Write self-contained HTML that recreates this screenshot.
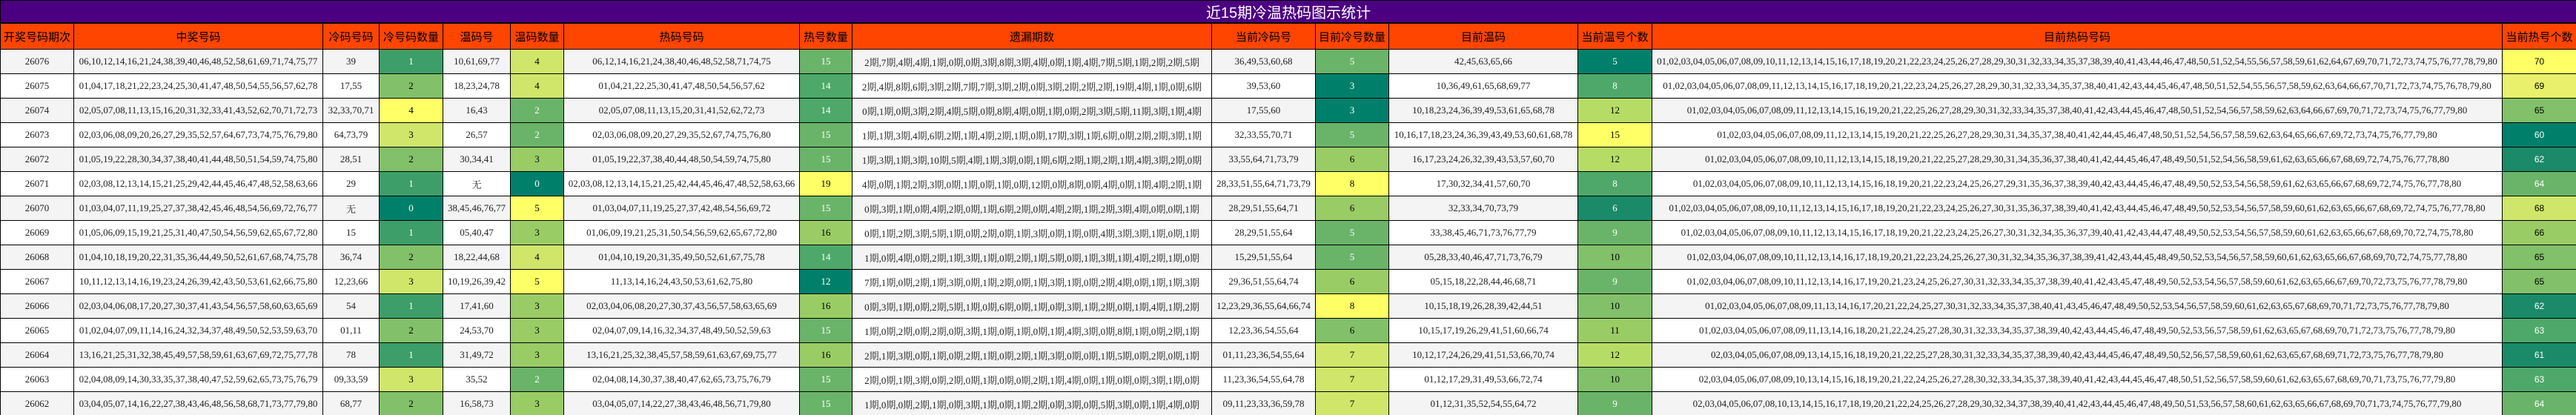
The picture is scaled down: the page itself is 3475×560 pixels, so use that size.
<!DOCTYPE html>
<html><head><meta charset="utf-8"><style>
html,body{margin:0;padding:0;background:#fff;width:3475px;height:560px;overflow:hidden}
table{border-collapse:collapse;table-layout:fixed;width:3475px}
td,th{border:1px solid #000;text-align:center;padding:0;white-space:nowrap;overflow:hidden;font-family:"Liberation Serif","Noto Serif CJK SC",serif;font-size:13px;color:#222}
.t td{background:#4b0082;color:#fff;height:27px;font-family:"Liberation Sans","Noto Sans CJK SC",sans-serif;font-size:20px;border-bottom:2px solid #000}
.h th{background:#ff4500;color:#000;height:34px;font-weight:normal;font-family:"Liberation Sans","Noto Sans CJK SC",sans-serif;font-size:15px}
tr.r td{height:32px}
tr.r:nth-child(odd) td{background:#f4f4f4}
tr.r:nth-child(even) td{background:#fff}
tr.r td.l{font-family:"Liberation Sans",sans-serif;font-size:12px}
tr.r td.c0{background:#00806a;color:#fff}
tr.r td.c1{background:#1a8a68;color:#fff}
tr.r td.c2{background:#3d9e69;color:#fff}
tr.r td.c3{background:#4ea86a;color:#fff}
tr.r td.c4{background:#6ab469;color:#fff}
tr.r td.c5{background:#82c06a;color:#000}
tr.r td.c6{background:#9acc66;color:#000}
tr.r td.c7{background:#b6dc66;color:#000}
tr.r td.c8{background:#cfe66a;color:#000}
tr.r td.c9{background:#e8f06c;color:#000}
tr.r td.c10{background:#ffff66;color:#000}
</style></head><body>
<table>
<colgroup><col style="width:99px"><col style="width:336px"><col style="width:76px"><col style="width:86px"><col style="width:91px"><col style="width:72px"><col style="width:318px"><col style="width:71px"><col style="width:485px"><col style="width:140px"><col style="width:99px"><col style="width:255px"><col style="width:100px"><col style="width:1147px"><col style="width:100px"></colgroup>
<tr class="t"><td colspan="15">近15期冷温热码图示统计</td></tr>
<tr class="h"><th>开奖号码期次</th><th>中奖号码</th><th>冷码号码</th><th>冷号码数量</th><th>温码号</th><th>温码数量</th><th>热码号码</th><th>热号数量</th><th>遗漏期数</th><th>当前冷码号</th><th>目前冷号数量</th><th>目前温码</th><th>当前温号个数</th><th>目前热码号码</th><th>当前热号个数</th></tr>
<tr class="r"><td>26076</td><td>06,10,12,14,16,21,24,38,39,40,46,48,52,58,61,69,71,74,75,77</td><td>39</td><td class="c2">1</td><td>10,61,69,77</td><td class="c8">4</td><td>06,12,14,16,21,24,38,40,46,48,52,58,71,74,75</td><td class="c4">15</td><td>2期,7期,4期,4期,1期,0期,0期,3期,8期,3期,4期,0期,1期,4期,7期,5期,1期,2期,2期,5期</td><td>36,49,53,60,68</td><td class="c4">5</td><td>42,45,63,65,66</td><td class="c0">5</td><td>01,02,03,04,05,06,07,08,09,10,11,12,13,14,15,16,17,18,19,20,21,22,23,24,25,26,27,28,29,30,31,32,33,34,35,37,38,39,40,41,43,44,46,47,48,50,51,52,54,55,56,57,58,59,61,62,64,67,69,70,71,72,73,74,75,76,77,78,79,80</td><td class="c10 l">70</td></tr>
<tr class="r"><td>26075</td><td>01,04,17,18,21,22,23,24,25,30,41,47,48,50,54,55,56,57,62,78</td><td>17,55</td><td class="c5">2</td><td>18,23,24,78</td><td class="c8">4</td><td>01,04,21,22,25,30,41,47,48,50,54,56,57,62</td><td class="c3">14</td><td>2期,4期,8期,6期,3期,2期,7期,7期,3期,2期,0期,3期,2期,2期,2期,19期,4期,1期,0期,6期</td><td>39,53,60</td><td class="c0">3</td><td>10,36,49,61,65,68,69,77</td><td class="c3">8</td><td>01,02,03,04,05,06,07,08,09,11,12,13,14,15,16,17,18,19,20,21,22,23,24,25,26,27,28,29,30,31,32,33,34,35,37,38,40,41,42,43,44,45,46,47,48,50,51,52,54,55,56,57,58,59,62,63,64,66,67,70,71,72,73,74,75,76,78,79,80</td><td class="c9 l">69</td></tr>
<tr class="r"><td>26074</td><td>02,05,07,08,11,13,15,16,20,31,32,33,41,43,52,62,70,71,72,73</td><td>32,33,70,71</td><td class="c10">4</td><td>16,43</td><td class="c4">2</td><td>02,05,07,08,11,13,15,20,31,41,52,62,72,73</td><td class="c3">14</td><td>0期,1期,0期,3期,2期,4期,5期,0期,8期,4期,0期,1期,0期,2期,3期,5期,11期,3期,1期,4期</td><td>17,55,60</td><td class="c0">3</td><td>10,18,23,24,36,39,49,53,61,65,68,78</td><td class="c7">12</td><td>01,02,03,04,05,06,07,08,09,11,12,13,14,15,16,19,20,21,22,25,26,27,28,29,30,31,32,33,34,35,37,38,40,41,42,43,44,45,46,47,48,50,51,52,54,56,57,58,59,62,63,64,66,67,69,70,71,72,73,74,75,76,77,79,80</td><td class="c5 l">65</td></tr>
<tr class="r"><td>26073</td><td>02,03,06,08,09,20,26,27,29,35,52,57,64,67,73,74,75,76,79,80</td><td>64,73,79</td><td class="c8">3</td><td>26,57</td><td class="c4">2</td><td>02,03,06,08,09,20,27,29,35,52,67,74,75,76,80</td><td class="c4">15</td><td>1期,1期,3期,4期,6期,2期,1期,4期,2期,1期,0期,17期,3期,1期,6期,0期,2期,2期,3期,1期</td><td>32,33,55,70,71</td><td class="c4">5</td><td>10,16,17,18,23,24,36,39,43,49,53,60,61,68,78</td><td class="c10">15</td><td>01,02,03,04,05,06,07,08,09,11,12,13,14,15,19,20,21,22,25,26,27,28,29,30,31,34,35,37,38,40,41,42,44,45,46,47,48,50,51,52,54,56,57,58,59,62,63,64,65,66,67,69,72,73,74,75,76,77,79,80</td><td class="c0 l">60</td></tr>
<tr class="r"><td>26072</td><td>01,05,19,22,28,30,34,37,38,40,41,44,48,50,51,54,59,74,75,80</td><td>28,51</td><td class="c5">2</td><td>30,34,41</td><td class="c6">3</td><td>01,05,19,22,37,38,40,44,48,50,54,59,74,75,80</td><td class="c4">15</td><td>1期,3期,1期,3期,10期,5期,4期,1期,3期,0期,1期,6期,2期,1期,2期,1期,4期,3期,2期,0期</td><td>33,55,64,71,73,79</td><td class="c6">6</td><td>16,17,23,24,26,32,39,43,53,57,60,70</td><td class="c7">12</td><td>01,02,03,04,05,06,07,08,09,10,11,12,13,14,15,18,19,20,21,22,25,27,28,29,30,31,34,35,36,37,38,40,41,42,44,45,46,47,48,49,50,51,52,54,56,58,59,61,62,63,65,66,67,68,69,72,74,75,76,77,78,80</td><td class="c1 l">62</td></tr>
<tr class="r"><td>26071</td><td>02,03,08,12,13,14,15,21,25,29,42,44,45,46,47,48,52,58,63,66</td><td>29</td><td class="c2">1</td><td>无</td><td class="c0">0</td><td>02,03,08,12,13,14,15,21,25,42,44,45,46,47,48,52,58,63,66</td><td class="c10">19</td><td>4期,0期,1期,2期,3期,0期,1期,0期,1期,0期,12期,0期,8期,0期,4期,0期,1期,4期,2期,1期</td><td>28,33,51,55,64,71,73,79</td><td class="c10">8</td><td>17,30,32,34,41,57,60,70</td><td class="c3">8</td><td>01,02,03,04,05,06,07,08,09,10,11,12,13,14,15,16,18,19,20,21,22,23,24,25,26,27,29,31,35,36,37,38,39,40,42,43,44,45,46,47,48,49,50,52,53,54,56,58,59,61,62,63,65,66,67,68,69,72,74,75,76,77,78,80</td><td class="c4 l">64</td></tr>
<tr class="r"><td>26070</td><td>01,03,04,07,11,19,25,27,37,38,42,45,46,48,54,56,69,72,76,77</td><td>无</td><td class="c0">0</td><td>38,45,46,76,77</td><td class="c10">5</td><td>01,03,04,07,11,19,25,27,37,42,48,54,56,69,72</td><td class="c4">15</td><td>0期,3期,1期,0期,4期,2期,0期,1期,6期,2期,0期,4期,2期,1期,2期,3期,4期,0期,0期,1期</td><td>28,29,51,55,64,71</td><td class="c6">6</td><td>32,33,34,70,73,79</td><td class="c1">6</td><td>01,02,03,04,05,06,07,08,09,10,11,12,13,14,15,16,17,18,19,20,21,22,23,24,25,26,27,30,31,35,36,37,38,39,40,41,42,43,44,45,46,47,48,49,50,52,53,54,56,57,58,59,60,61,62,63,65,66,67,68,69,72,74,75,76,77,78,80</td><td class="c8 l">68</td></tr>
<tr class="r"><td>26069</td><td>01,05,06,09,15,19,21,25,31,40,47,50,54,56,59,62,65,67,72,80</td><td>15</td><td class="c2">1</td><td>05,40,47</td><td class="c6">3</td><td>01,06,09,19,21,25,31,50,54,56,59,62,65,67,72,80</td><td class="c6">16</td><td>0期,1期,2期,3期,5期,1期,0期,2期,0期,1期,3期,0期,1期,0期,4期,3期,3期,1期,0期,1期</td><td>28,29,51,55,64</td><td class="c4">5</td><td>33,38,45,46,71,73,76,77,79</td><td class="c4">9</td><td>01,02,03,04,05,06,07,08,09,10,11,12,13,14,15,16,17,18,19,20,21,22,23,24,25,26,27,30,31,32,34,35,36,37,39,40,41,42,43,44,47,48,49,50,52,53,54,56,57,58,59,60,61,62,63,65,66,67,68,69,70,72,74,75,78,80</td><td class="c6 l">66</td></tr>
<tr class="r"><td>26068</td><td>01,04,10,18,19,20,22,31,35,36,44,49,50,52,61,67,68,74,75,78</td><td>36,74</td><td class="c5">2</td><td>18,22,44,68</td><td class="c8">4</td><td>01,04,10,19,20,31,35,49,50,52,61,67,75,78</td><td class="c3">14</td><td>1期,0期,4期,0期,2期,1期,3期,1期,0期,2期,1期,5期,0期,1期,3期,1期,4期,2期,1期,0期</td><td>15,29,51,55,64</td><td class="c4">5</td><td>05,28,33,40,46,47,71,73,76,79</td><td class="c5">10</td><td>01,02,03,04,06,07,08,09,10,11,12,13,14,16,17,18,19,20,21,22,23,24,25,26,27,30,31,32,34,35,36,37,38,39,41,42,43,44,45,48,49,50,52,53,54,56,57,58,59,60,61,62,63,65,66,67,68,69,70,72,74,75,77,78,80</td><td class="c5 l">65</td></tr>
<tr class="r"><td>26067</td><td>10,11,12,13,14,16,19,23,24,26,39,42,43,50,53,61,62,66,75,80</td><td>12,23,66</td><td class="c8">3</td><td>10,19,26,39,42</td><td class="c10">5</td><td>11,13,14,16,24,43,50,53,61,62,75,80</td><td class="c0">12</td><td>7期,1期,0期,2期,1期,3期,0期,1期,2期,0期,1期,3期,1期,0期,2期,4期,0期,1期,1期,3期</td><td>29,36,51,55,64,74</td><td class="c6">6</td><td>05,15,18,22,28,44,46,68,71</td><td class="c4">9</td><td>01,02,03,04,06,07,08,09,10,11,12,13,14,16,17,19,20,21,23,24,25,26,27,30,31,32,33,34,35,37,38,39,40,41,42,43,45,47,48,49,50,52,53,54,56,57,58,59,60,61,62,63,65,66,67,69,70,72,73,75,76,77,78,79,80</td><td class="c5 l">65</td></tr>
<tr class="r"><td>26066</td><td>02,03,04,06,08,17,20,27,30,37,41,43,54,56,57,58,60,63,65,69</td><td>54</td><td class="c2">1</td><td>17,41,60</td><td class="c6">3</td><td>02,03,04,06,08,20,27,30,37,43,56,57,58,63,65,69</td><td class="c6">16</td><td>0期,3期,1期,0期,2期,5期,1期,0期,6期,0期,1期,0期,3期,1期,2期,0期,1期,4期,1期,2期</td><td>12,23,29,36,55,64,66,74</td><td class="c10">8</td><td>10,15,18,19,26,28,39,42,44,51</td><td class="c5">10</td><td>01,02,03,04,05,06,07,08,09,11,13,14,16,17,20,21,22,24,25,27,30,31,32,33,34,35,37,38,40,41,43,45,46,47,48,49,50,52,53,54,56,57,58,59,60,61,62,63,65,67,68,69,70,71,72,73,75,76,77,78,79,80</td><td class="c1 l">62</td></tr>
<tr class="r"><td>26065</td><td>01,02,04,07,09,11,14,16,24,32,34,37,48,49,50,52,53,59,63,70</td><td>01,11</td><td class="c5">2</td><td>24,53,70</td><td class="c6">3</td><td>02,04,07,09,14,16,32,34,37,48,49,50,52,59,63</td><td class="c4">15</td><td>1期,0期,2期,0期,2期,0期,3期,1期,0期,1期,0期,1期,4期,3期,0期,8期,1期,0期,2期,1期</td><td>12,23,36,54,55,64</td><td class="c5">6</td><td>10,15,17,19,26,29,41,51,60,66,74</td><td class="c6">11</td><td>01,02,03,04,05,06,07,08,09,11,13,14,16,18,20,21,22,24,25,27,28,30,31,32,33,34,35,37,38,39,40,42,43,44,45,46,47,48,49,50,52,53,56,57,58,59,61,62,63,65,67,68,69,70,71,72,73,75,76,77,78,79,80</td><td class="c3 l">63</td></tr>
<tr class="r"><td>26064</td><td>13,16,21,25,31,32,38,45,49,57,58,59,61,63,67,69,72,75,77,78</td><td>78</td><td class="c2">1</td><td>31,49,72</td><td class="c6">3</td><td>13,16,21,25,32,38,45,57,58,59,61,63,67,69,75,77</td><td class="c6">16</td><td>2期,1期,3期,0期,1期,0期,2期,1期,0期,2期,1期,3期,0期,0期,1期,5期,0期,2期,0期,1期</td><td>01,11,23,36,54,55,64</td><td class="c8">7</td><td>10,12,17,24,26,29,41,51,53,66,70,74</td><td class="c7">12</td><td>02,03,04,05,06,07,08,09,13,14,15,16,18,19,20,21,22,25,27,28,30,31,32,33,34,35,37,38,39,40,42,43,44,45,46,47,48,49,50,52,56,57,58,59,60,61,62,63,65,67,68,69,71,72,73,75,76,77,78,79,80</td><td class="c1 l">61</td></tr>
<tr class="r"><td>26063</td><td>02,04,08,09,14,30,33,35,37,38,40,47,52,59,62,65,73,75,76,79</td><td>09,33,59</td><td class="c8">3</td><td>35,52</td><td class="c4">2</td><td>02,04,08,14,30,37,38,40,47,62,65,73,75,76,79</td><td class="c4">15</td><td>2期,0期,1期,3期,0期,2期,0期,1期,0期,0期,2期,1期,4期,0期,1期,0期,0期,3期,1期,0期</td><td>11,23,36,54,55,64,78</td><td class="c8">7</td><td>01,12,17,29,31,49,53,66,72,74</td><td class="c5">10</td><td>02,03,04,05,06,07,08,09,10,13,14,15,16,18,19,20,21,22,24,25,26,27,28,30,32,33,34,35,37,38,39,40,41,42,43,44,45,46,47,48,50,51,52,56,57,58,59,60,61,62,63,65,67,68,69,70,71,73,75,76,77,79,80</td><td class="c3 l">63</td></tr>
<tr class="r"><td>26062</td><td>03,04,05,07,14,16,22,27,38,43,46,48,56,58,68,71,73,77,79,80</td><td>68,77</td><td class="c5">2</td><td>16,58,73</td><td class="c6">3</td><td>03,04,05,07,14,22,27,38,43,46,48,56,71,79,80</td><td class="c4">15</td><td>1期,0期,0期,2期,1期,0期,3期,1期,0期,1期,2期,0期,3期,0期,5期,3期,0期,1期,4期,0期</td><td>09,11,23,33,36,59,78</td><td class="c8">7</td><td>01,12,31,35,52,54,55,64,72</td><td class="c4">9</td><td>02,03,04,05,06,07,08,10,13,14,15,16,17,18,19,20,21,22,24,25,26,27,28,29,30,32,34,37,38,39,40,41,42,43,44,45,46,47,48,49,50,51,53,56,57,58,60,61,62,63,65,66,67,68,69,70,71,73,74,75,76,77,79,80</td><td class="c4 l">64</td></tr>
</table>
</body></html>
